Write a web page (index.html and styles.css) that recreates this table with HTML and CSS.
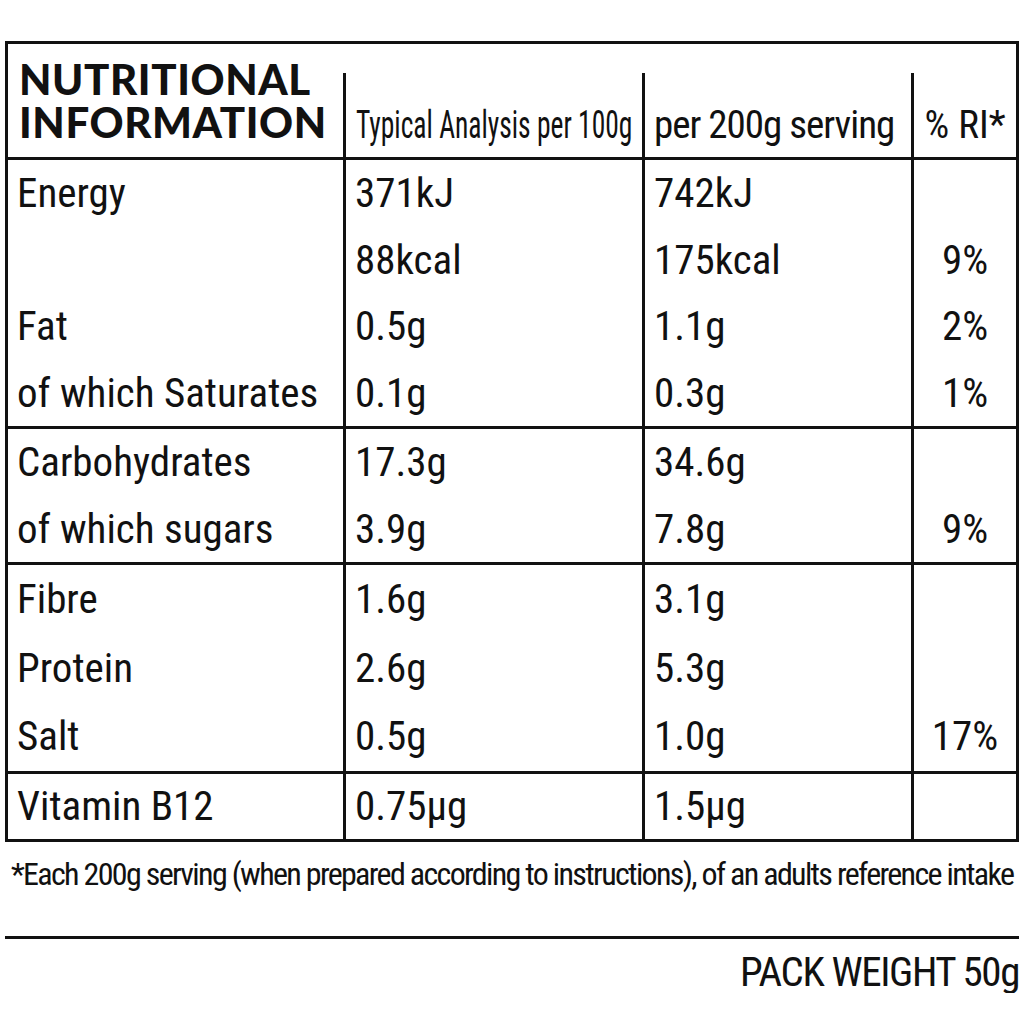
FILE: index.html
```html
<!DOCTYPE html>
<html lang="en">
<head>
<meta charset="utf-8">
<title>Nutritional Information</title>
<link rel="stylesheet" href="styles.css">
</head>
<body>
<div class="label">
  <div class="panel">
    <div class="head">
      <div class="title"><span class="tline">NUTRITIONAL</span><span class="tline">INFORMATION</span></div>
      <div class="hcell"><span class="squeeze">Typical Analysis per 100g</span></div>
      <div class="hcell serving">per 200g serving</div>
      <div class="hcell ri">% RI*</div>
    </div>

    <div class="group g-std">
      <div class="c name">Energy</div><div class="c val">371kJ</div><div class="c val">742kJ</div><div class="c pct"></div>
      <div class="c name"></div><div class="c val">88kcal</div><div class="c val">175kcal</div><div class="c pct">9%</div>
      <div class="c name">Fat</div><div class="c val">0.5g</div><div class="c val">1.1g</div><div class="c pct">2%</div>
      <div class="c name">of which Saturates</div><div class="c val">0.1g</div><div class="c val">0.3g</div><div class="c pct">1%</div>
    </div>

    <div class="group g-std">
      <div class="c name">Carbohydrates</div><div class="c val">17.3g</div><div class="c val">34.6g</div><div class="c pct"></div>
      <div class="c name">of which sugars</div><div class="c val">3.9g</div><div class="c val">7.8g</div><div class="c pct">9%</div>
    </div>

    <div class="group g-tall">
      <div class="c name">Fibre</div><div class="c val">1.6g</div><div class="c val">3.1g</div><div class="c pct"></div>
      <div class="c name">Protein</div><div class="c val">2.6g</div><div class="c val">5.3g</div><div class="c pct"></div>
      <div class="c name">Salt</div><div class="c val">0.5g</div><div class="c val">1.0g</div><div class="c pct">17%</div>
    </div>

    <div class="group g-last">
      <div class="c name">Vitamin B12</div><div class="c val">0.75µg</div><div class="c val">1.5µg</div><div class="c pct"></div>
    </div>
  </div>

  <p class="note">*Each 200g serving (when prepared according to instructions), of an adults reference intake</p>
  <div class="rule"></div>
  <p class="weight">PACK WEIGHT 50g</p>
</div>
</body>
</html>
```
FILE: styles.css
```css
html, body {
  margin: 0;
  padding: 0;
  background: #ffffff;
}

body {
  color: #111111;
  font-family: "Roboto Condensed", Roboto, "Liberation Sans", sans-serif;
}

.label {
  width: 1014px;
  margin-left: 5px;
  padding-top: 41px;
}

.panel {
  border: 3px solid #111111;
}

.head {
  display: grid;
  grid-template-columns: 335px 299px 269px 105px;
  height: 116px;
  border-bottom: 3px solid #111111;
  box-sizing: border-box;
  align-items: end;
}

.title {
  align-self: start;
  display: flex;
  flex-direction: column;
  padding: 17px 0 0 11px;
  font-family: Lato, "Open Sans", sans-serif;
  font-weight: 900;
  font-size: 42px;
  line-height: 36px;
  letter-spacing: 0.6px;
}

.tline {
  display: block;
  height: 43px;
  white-space: nowrap;
}

.hcell {
  height: 84px;
  box-sizing: border-box;
  border-left: 3px solid #111111;
  display: flex;
  align-items: flex-end;
  padding: 0 0 12px 10px;
  font-size: 39px;
  line-height: 1;
  white-space: nowrap;
}

.squeeze {
  display: inline-block;
  transform: scaleX(0.705);
  transform-origin: left bottom;
}

.serving {
  letter-spacing: -1px;
  padding-left: 9px;
}

.ri {
  justify-content: center;
  padding-left: 0;
}

.group {
  display: grid;
  grid-template-columns: 335px 299px 269px 105px;
  border-bottom: 3px solid #111111;
  font-size: 41px;
}

.g-std { grid-auto-rows: 66.5px; line-height: 66.5px; }
.g-tall { grid-auto-rows: 68.7px; line-height: 68.7px; }
.g-last { grid-auto-rows: 65px; line-height: 65px; border-bottom: 0; }

.c {
  white-space: nowrap;
}

.name {
  padding-left: 9px;
}

.val {
  border-left: 3px solid #111111;
  padding-left: 9px;
}

.pct {
  border-left: 3px solid #111111;
  text-align: center;
}

.note {
  margin: 16px 0 0 0;
  padding-left: 6px;
  font-size: 32px;
  line-height: 1;
  white-space: nowrap;
  letter-spacing: -1.67px;
}

.rule {
  height: 3px;
  background: #111111;
  margin-top: 46px;
}

.weight {
  margin: 13px 0 0 0;
  text-align: right;
  font-size: 41px;
  line-height: 1;
  letter-spacing: -1.4px;
}
```
